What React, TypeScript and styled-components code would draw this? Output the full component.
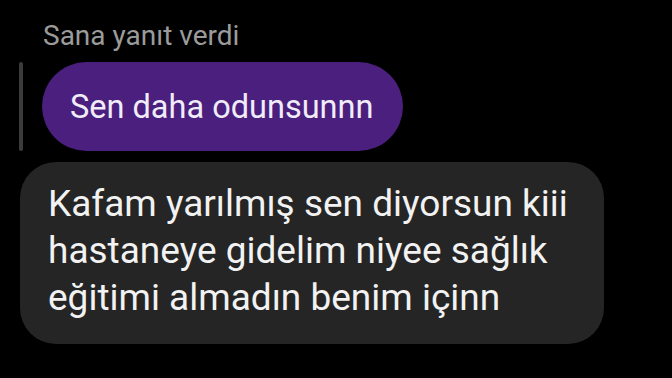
import React from 'react';
import styled, { createGlobalStyle } from 'styled-components';

const GlobalStyle = createGlobalStyle`
  html, body {
    margin: 0;
    padding: 0;
    background: #000;
    font-family: Roboto, "Noto Sans", "Liberation Sans", sans-serif;
  }
`;

const Thread = styled.div`
  width: 672px;
  height: 378px;
  overflow: hidden;
  background: #000;
  display: flex;
  flex-direction: column;
  padding-top: 19px;
  box-sizing: border-box;
`;

const ReplyLabel = styled.div`
  color: #9b9b9b;
  font-size: 28px;
  line-height: 34px;
  padding-left: 43px;
  margin-bottom: 9px;
`;

const QuoteRow = styled.div`
  display: flex;
  align-items: stretch;
  padding-left: 19px;
  gap: 19px;
`;

const QuoteBar = styled.div`
  width: 4px;
  border-radius: 2px;
  background: #3b3b3b;
`;

const QuotedBubble = styled.div`
  background: #4a1f7e;
  color: #f0ecf8;
  font-size: 32.5px;
  height: 89px;
  border-radius: 45px;
  padding: 0 30px 0 28px;
  display: flex;
  align-items: center;
`;

const MessageBubble = styled.div`
  align-self: flex-start;
  width: 584px;
  box-sizing: border-box;
  margin: 11px 0 0 20px;
  background: #252525;
  color: #f2f2f2;
  border-radius: 36px;
  padding: 18px 20px 23px 28px;
  font-size: 37px;
  line-height: 47px;
`;

export default function App() {
  return (
    <>
      <GlobalStyle />
      <Thread>
        <ReplyLabel>Sana yanıt verdi</ReplyLabel>
        <QuoteRow>
          <QuoteBar />
          <QuotedBubble>Sen daha odunsunnn</QuotedBubble>
        </QuoteRow>
        <MessageBubble>
          Kafam yarılmış sen diyorsun kiii
          <br />
          hastaneye gidelim niyee sağlık
          <br />
          eğitimi almadın benim içinn
        </MessageBubble>
      </Thread>
    </>
  );
}
